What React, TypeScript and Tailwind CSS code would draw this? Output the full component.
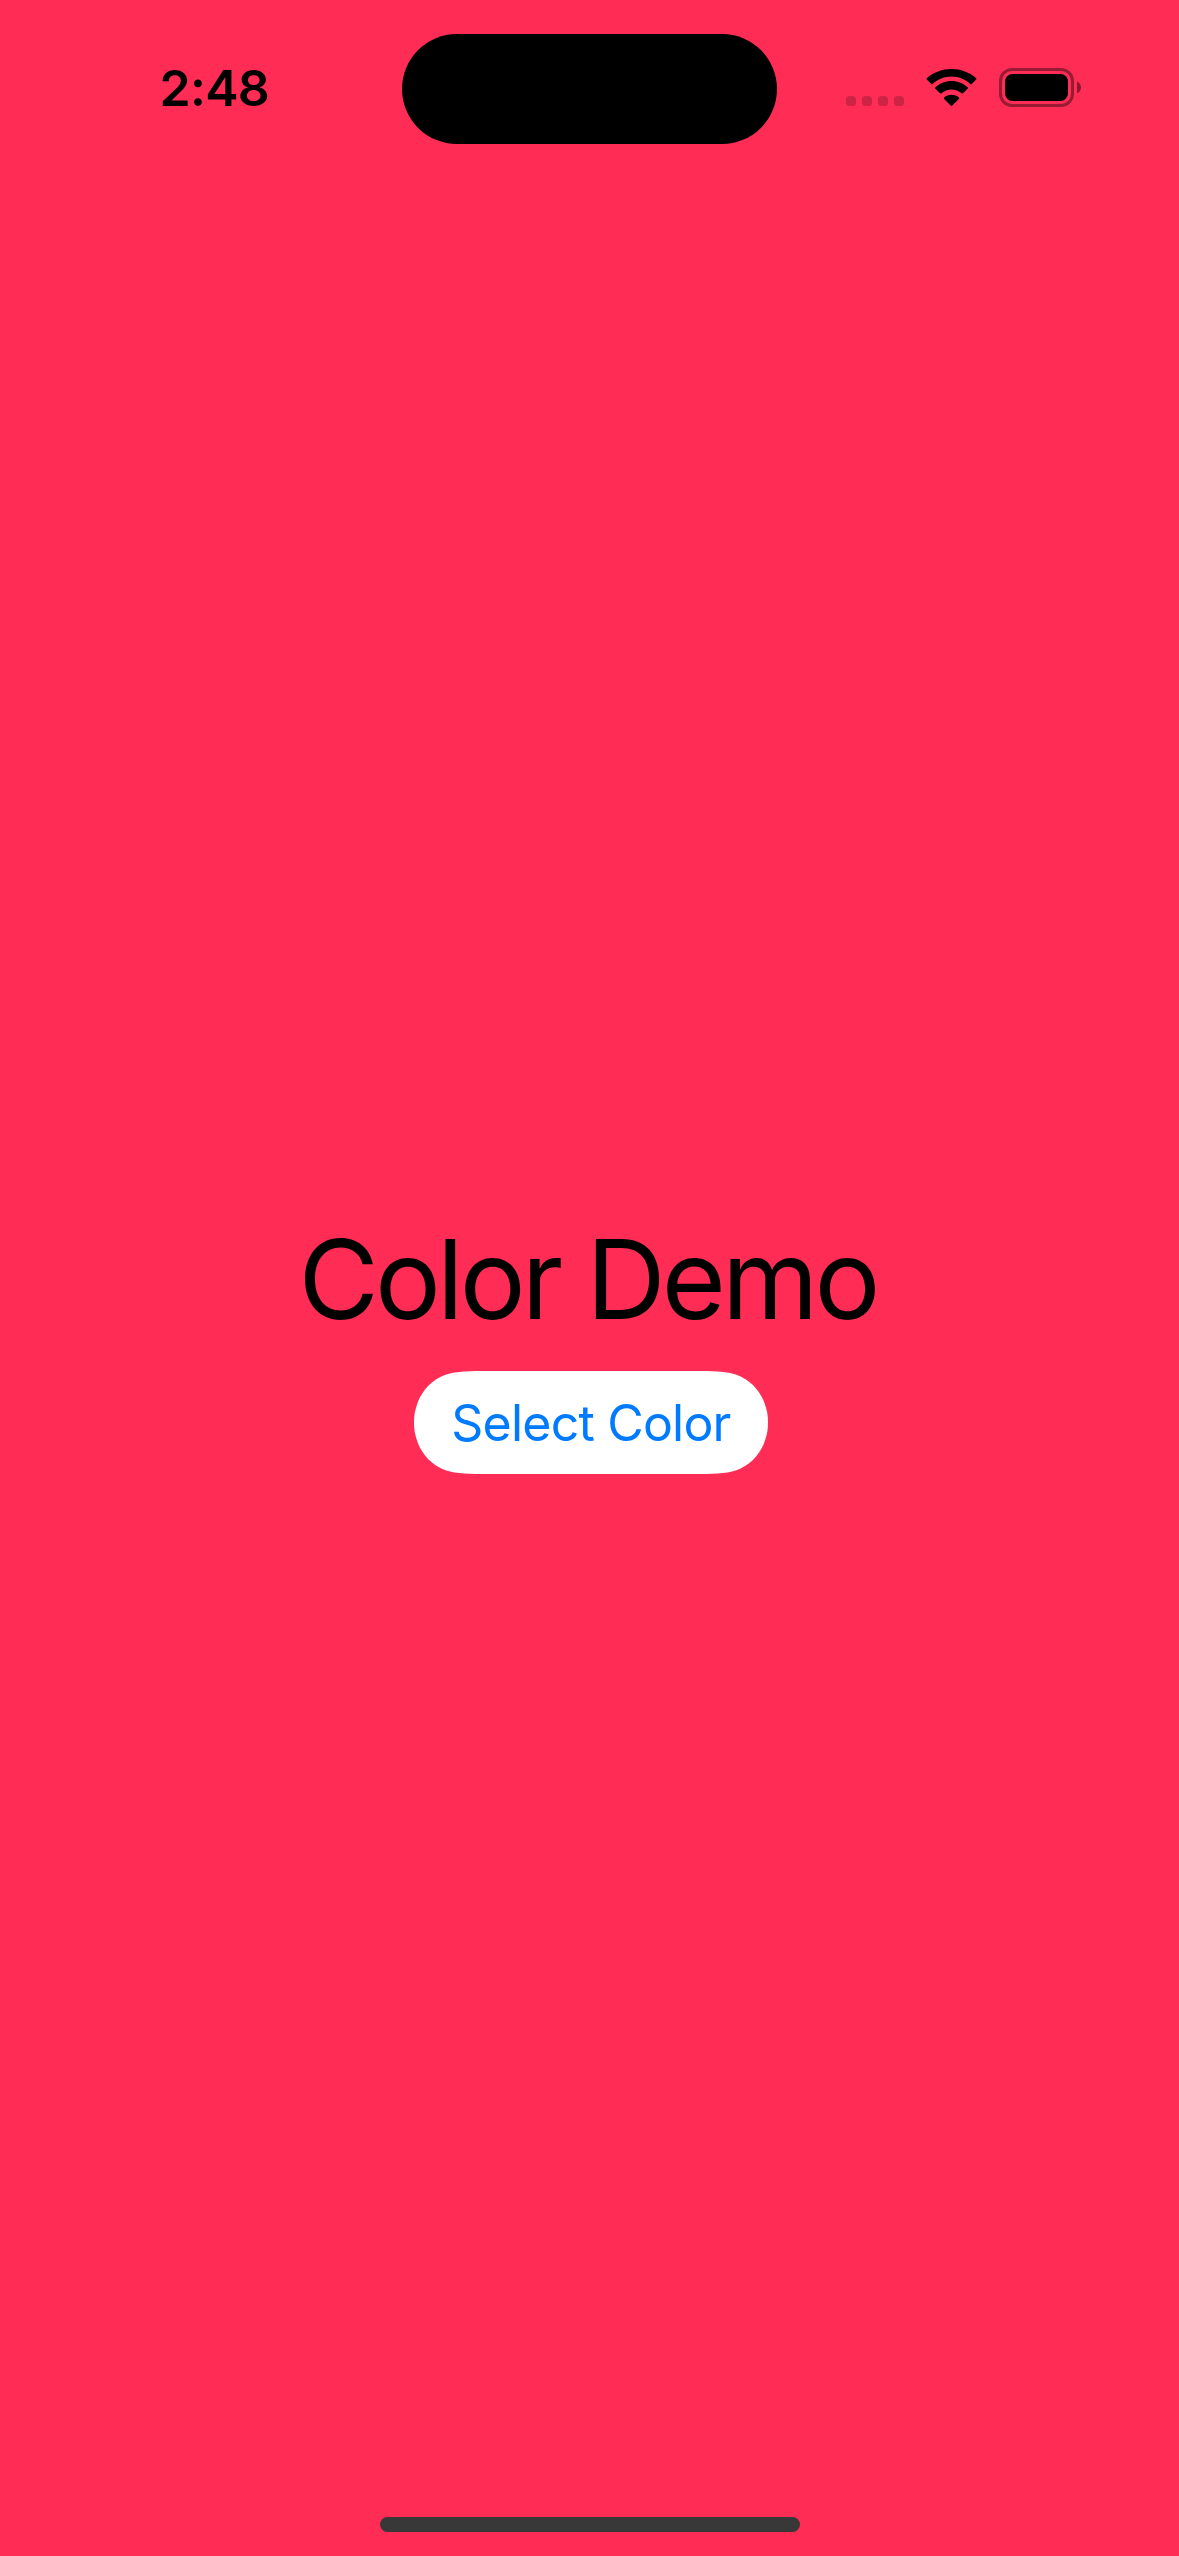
function SignalDots() {
  return (
    <div className="flex gap-[6px] pt-[27px]">
      {[0, 1, 2, 3].map((i) => (
        <span key={i} className="size-[10px] rounded-[3.5px] bg-black/20" />
      ))}
    </div>
  );
}

function WifiIcon() {
  return (
    <svg width="51" height="37" viewBox="0 0 51 37" className="ml-[22px]" aria-hidden="true">
      <path d="M25.5 7.6c7.1 0 13.8 2.7 18.8 7.5.5.5 1 .4 1.4 0l4.5-4.5c.4-.4.4-1 0-1.4C43.5 3.3 34.8 0 25.5 0S7.5 3.3.8 9.2c-.4.4-.4 1 0 1.4l4.5 4.5c.4.4.9.5 1.4 0 5-4.8 11.7-7.5 18.8-7.5Z" />
      <path d="M25.5 20.4c3.8 0 7.3 1.4 10 3.9.4.4 1 .4 1.4 0l4.7-4.6c.4-.4.4-1 0-1.4-4.2-4-9.9-6.3-16.1-6.3s-11.9 2.3-16.1 6.3c-.4.4-.4 1 0 1.4l4.7 4.6c.4.4 1 .4 1.4 0 2.7-2.5 6.2-3.9 10-3.9Z" />
      <path d="M32.9 28.5c.4.4.4 1 0 1.4l-6.6 6.6c-.5.5-1.1.5-1.6 0l-6.6-6.6c-.4-.4-.4-1 0-1.4 2-1.7 4.6-2.7 7.4-2.7s5.4 1 7.4 2.7Z" />
    </svg>
  );
}

function BatteryIcon() {
  return (
    <svg width="82" height="39" viewBox="0 0 82 39" className="ml-[22px]" aria-hidden="true">
      <rect x="1.5" y="1.5" width="72" height="36" rx="11.5" fill="none" stroke="black" strokeWidth="3" opacity=".4" />
      <rect x="6" y="6" width="63" height="27" rx="7.5" />
      <path d="M78 13.5c2.5 1 4 3.4 4 6s-1.5 5-4 6Z" opacity=".45" />
    </svg>
  );
}

function StatusBar() {
  return (
    <header className="flex h-[177px] shrink-0 items-start">
      <div className="w-[402px] pt-[58px] pl-[159.5px] text-[50px] leading-[60px] font-semibold tracking-[-0.7px]">
        2:48
      </div>
      <div className="mt-[34px] h-[110px] w-[375px] rounded-full bg-black" />
      <div className="flex items-start pt-[69px] pl-[69px]">
        <SignalDots />
        <WifiIcon />
        <div className="-mt-px">
          <BatteryIcon />
        </div>
      </div>
    </header>
  );
}

function SelectColorButton() {
  return (
    <button
      type="button"
      className="relative flex h-[103px] w-[354px] items-center justify-center text-[50px] leading-[60px] text-[#007aff]"
    >
      <svg className="absolute inset-0" width="354" height="103" viewBox="0 0 354 103" fill="white" aria-hidden="true">
        <path d="M76 0H278C299.6 0 310.4 0 322.5 3.7C335.4 8.5 345.5 18.6 350.3 31.5C353 39 354 44 354 51.5C354 59 353 64 350.3 71.5C345.5 84.4 335.4 94.5 322.5 99.3C310.4 103 299.6 103 278 103H76C54.4 103 43.6 103 31.5 99.3C18.6 94.5 8.5 84.4 3.7 71.5C1 64 0 59 0 51.5C0 44 1 39 3.7 31.5C8.5 18.6 18.6 8.5 31.5 3.7C43.6 0 54.4 0 76 0Z" />
      </svg>
      <span className="relative whitespace-nowrap tracking-[-0.8px]">Select Color</span>
    </button>
  );
}

export default function App() {
  return (
    <div className="flex h-[2556px] w-[1179px] flex-col overflow-hidden bg-[#ff2d55] font-['Inter',sans-serif] text-black">
      <StatusBar />
      <main className="flex flex-1 flex-col items-center pt-[1036px]">
        <h1 className="mr-[4px] text-[110px] leading-[132px] font-normal whitespace-nowrap tracking-[-3.9px]">Color Demo</h1>
        <div className="mt-[26px] ml-[3px]">
          <SelectColorButton />
        </div>
      </main>
      <div className="mb-[24px] ml-[380px] h-[15px] w-[420px] shrink-0 rounded-full bg-[#383838]" />
    </div>
  );
}
